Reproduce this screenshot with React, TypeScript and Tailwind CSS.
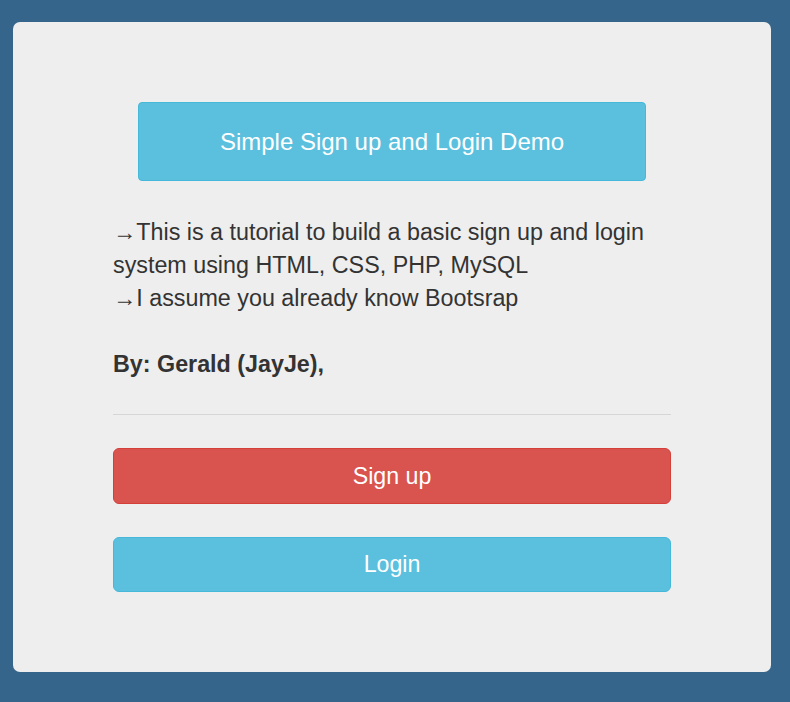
export default function App() {
  return (
    <div
      className="min-h-screen bg-[#35658a] pt-[22px] pl-[13px] pb-[30px]"
      style={{ fontFamily: '"Liberation Sans", Arial, sans-serif' }}
    >
      <div className="w-[758px] rounded-[7px] bg-[#eeeeee] px-[100px] pt-[80px] pb-[80px] text-[#333333]">
        <div className="mx-[25px] flex h-[79px] items-center justify-center rounded-[4px] border border-[#46b8da] bg-[#5bc0de] text-[24px] text-white">
          Simple Sign up and Login Demo
        </div>

        <p className="mt-[35px] text-[23.3px] leading-[33px]">
          →This is a tutorial to build a basic sign up and login system using
          HTML, CSS, PHP, MySQL
          <br />
          →I assume you already know Bootsrap
          <br />
          <br />
          <b>By: Gerald (JayJe),</b>
        </p>

        <hr className="mt-[33px] border-t border-[#d6d6d6]" />

        <button className="mt-[33px] flex h-[56px] w-full items-center justify-center rounded-[6px] border border-[#d43f3a] bg-[#d9534f] text-[23.2px] text-white">
          Sign up
        </button>
        <button className="mt-[33px] flex h-[55px] w-full items-center justify-center rounded-[6px] border border-[#46b8da] bg-[#5bc0de] text-[23.2px] text-white">
          Login
        </button>
      </div>
    </div>
  );
}
